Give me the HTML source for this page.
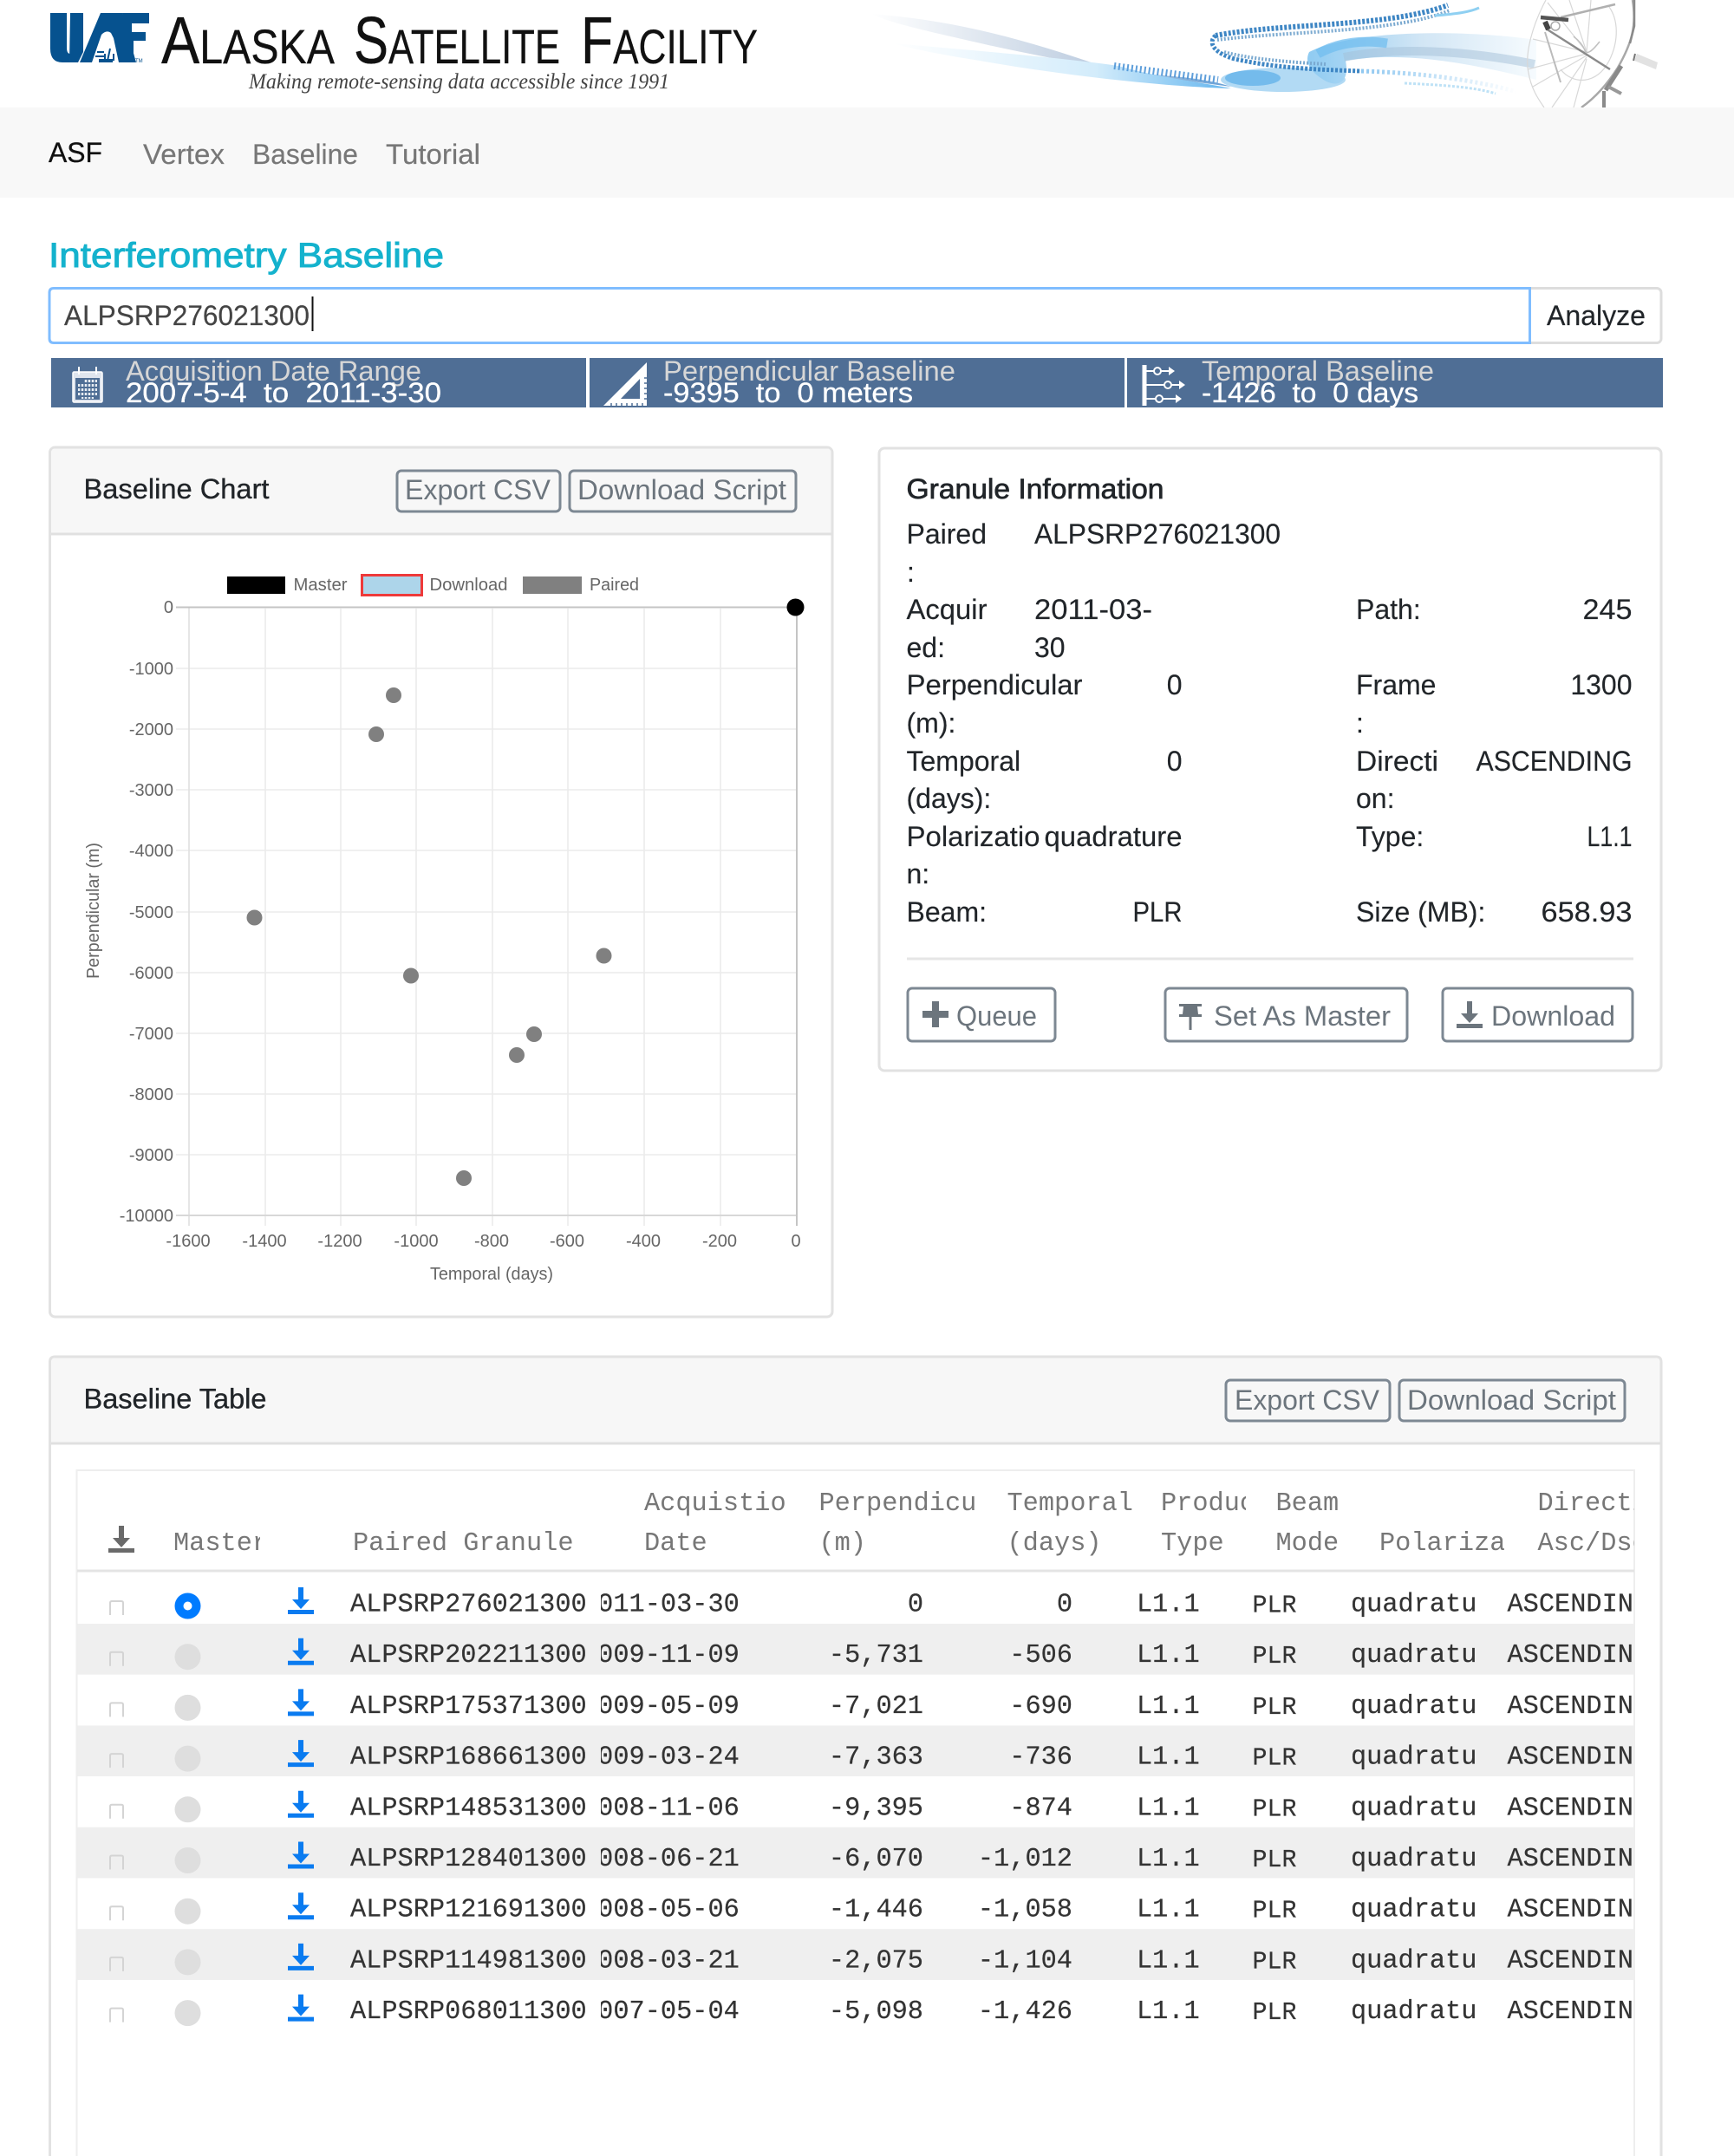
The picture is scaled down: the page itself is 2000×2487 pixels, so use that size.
<!DOCTYPE html>
<html><head><meta charset="utf-8"><title>Interferometry Baseline</title>
<style>
html,body{margin:0;padding:0;background:#fff;width:2000px;height:2487px;overflow:hidden}
svg{display:block;position:absolute;left:0;top:0}
text{font-family:"Liberation Sans",sans-serif;white-space:pre}
.m text,text.m{font-family:"Liberation Mono",monospace;font-size:30.3px}
.btn{fill:none;stroke:#7d8893;stroke-width:3}
.bt{fill:#6c757d;font-size:32px}
.h{font-size:32px;fill:#212529;stroke:#212529;stroke-width:.35}
.g{font-size:32px;fill:#212529;stroke:#212529;stroke-width:.15}
.tick{font-size:20px;fill:#666}
.leg{font-size:20px;fill:#666}
.st{font-size:32px;fill:#d6d6d6}
.sv{font-size:32px;fill:#fff;stroke:#fff;stroke-width:.3}
.hd text{fill:#777}
.row text{fill:#333;stroke:#333;stroke-width:.2}
</style></head>
<body>
<svg width="2000" height="2487" viewBox="0 0 2000 2487" xmlns="http://www.w3.org/2000/svg">
<defs>
<linearGradient id="g1" x1="0" x2="1" y1="0" y2="0"><stop offset="0" stop-color="#fff"/><stop offset=".35" stop-color="#d5dfeb"/><stop offset=".7" stop-color="#a7bcd6"/><stop offset="1" stop-color="#4a8ecf"/></linearGradient>
<linearGradient id="g2" x1="0" x2="1" y1="0" y2="0"><stop offset="0" stop-color="#fff"/><stop offset=".6" stop-color="#d3ecfb"/><stop offset="1" stop-color="#63b5ee"/></linearGradient>
<linearGradient id="g3" x1="0" x2="1" y1="0" y2="0"><stop offset="0" stop-color="#8fcbf2"/><stop offset=".5" stop-color="#d2e6f5"/><stop offset="1" stop-color="#f6fbfe"/></linearGradient>
<linearGradient id="g4" x1="0" x2="1" y1="0" y2="0"><stop offset="0" stop-color="#5fb0ea"/><stop offset="1" stop-color="#fff"/></linearGradient>
<path id="dl" d="M12 0h6v14h7L15 25 5 14h7zM0 26h30v5H0z"/>
<path id="cb" d="M1 17V3q0-2 2-2h11q2 0 2 2v14" fill="none" stroke="#d4d4d4" stroke-width="2"/>
<clipPath id="cd"><rect x="693" y="1815" width="170" height="59"/></clipPath>
<clipPath id="cq"><rect x="1550" y="1815" width="153" height="59"/></clipPath>
<clipPath id="ca"><rect x="1730" y="1815" width="155" height="59"/></clipPath>
<clipPath id="c1"><rect x="190" y="1700" width="110" height="110"/></clipPath>
<clipPath id="c2"><rect x="1330" y="1700" width="107" height="110"/></clipPath>
<clipPath id="c3"><rect x="1585" y="1700" width="150" height="110"/></clipPath>
<clipPath id="c4"><rect x="1770" y="1700" width="115" height="110"/></clipPath>
</defs>

<!-- UAF logo -->
<g fill="#06528f">
<path d="M58 15H77V55Q77 62 81 62L80 72H72Q58 72 58 56Z"/>
<path d="M81 15H96V60L90 72H80Z"/>
<path d="M92 72L116 15H141L157 72Z"/>
<path d="M141 15H172V27H152V37H168V47H154V72H146Z"/>
</g>
<path d="M106 72L117 40Q123 34 128 38L131 44L137 72H130V68H114V72Z" fill="#fff"/>
<path d="M112 60H120M110 65H122" stroke="#06528f" stroke-width="2" fill="none"/>
<path d="M121 62V70M127 56L124 70M131 62V70" stroke="#06528f" stroke-width="2" fill="none"/>
<text x="156" y="72" font-size="6" fill="#06528f">TM</text>

<!-- Title -->
<g fill="#111" stroke="#111" stroke-width=".3">
<text x="186" y="73" textLength="200" lengthAdjust="spacingAndGlyphs"><tspan font-size="77">A</tspan><tspan font-size="56">LASKA</tspan></text>
<text x="408" y="73" textLength="238" lengthAdjust="spacingAndGlyphs"><tspan font-size="77">S</tspan><tspan font-size="56">ATELLITE</tspan></text>
<text x="670" y="73" textLength="204" lengthAdjust="spacingAndGlyphs"><tspan font-size="77">F</tspan><tspan font-size="56">ACILITY</tspan></text>
</g>
<text x="287" y="102" font-size="25" fill="#444" style="font-family:'Liberation Serif',serif;font-style:italic" textLength="485" lengthAdjust="spacingAndGlyphs">Making remote-sensing data accessible since 1991</text>

<!-- Banner swooshes -->
<path d="M1005 16C1110 24 1195 50 1270 76C1320 90 1370 84 1420 100C1340 90 1240 74 1140 52C1080 38 1030 28 1005 16Z" fill="url(#g1)" opacity=".85"/>
<path d="M1030 50C1120 58 1220 66 1290 76C1330 88 1380 94 1420 102C1340 100 1220 86 1130 70C1080 62 1050 56 1030 50Z" fill="url(#g2)"/>
<path d="M1285 76L1405 92" stroke="#4d94d6" stroke-width="8" stroke-dasharray="2 3" fill="none" opacity=".9"/>
<ellipse cx="1480" cy="92" rx="72" ry="14" fill="#a4d3f2" opacity=".85"/>
<ellipse cx="1445" cy="90" rx="32" ry="9" fill="#5fb0ea" opacity=".75"/>
<path d="M1510 60C1560 34 1690 34 1772 46V92C1700 74 1620 58 1552 70C1556 90 1548 102 1530 94C1512 84 1504 72 1510 60Z" fill="url(#g3)"/>
<path d="M1520 62C1545 48 1575 46 1600 50" stroke="#71bdef" stroke-width="11" fill="none" opacity=".75"/>
<path d="M1550 66C1610 54 1690 58 1770 74" stroke="#a3bfd8" stroke-width="10" fill="none" opacity=".5"/>
<path d="M1402 41C1480 26 1600 32 1670 6" stroke="#3e86c4" stroke-width="6" stroke-dasharray="3 2" fill="none"/>
<path d="M1404 46C1480 36 1610 38 1672 12" stroke="#7aa9d0" stroke-width="4" stroke-dasharray="2 2" fill="none"/>
<path d="M1402 41C1392 50 1402 62 1424 68C1470 78 1510 80 1570 82" stroke="#3e86c4" stroke-width="5" stroke-dasharray="3 2" fill="none"/>
<path d="M1412 60C1440 68 1490 72 1530 74" stroke="#7aa9d0" stroke-width="4" stroke-dasharray="2 2" fill="none"/>
<path d="M1570 82C1640 84 1700 92 1750 106" stroke="url(#g4)" stroke-width="5" stroke-dasharray="3 3" fill="none" opacity=".7"/>
<path d="M1655 18C1680 16 1695 14 1706 9" stroke="#8fd0f2" stroke-width="3" fill="none"/>
<path d="M1620 96C1660 98 1700 100 1725 108" stroke="#bfe2f6" stroke-width="3" stroke-dasharray="3 2" fill="none"/>

<!-- Dish -->
<g fill="none" stroke="#d8d8d8" stroke-width="1.2">
<path d="M1783 0C1768 28 1758 62 1763 84C1766 102 1774 114 1781 124"/>
<path d="M1800 80C1814 98 1842 98 1856 70C1868 46 1866 22 1856 8"/>
<path d="M1762 80L1830 62M1768 100L1830 64M1790 124L1830 66M1815 124L1830 68M1768 45L1830 60M1785 3L1830 60M1810 0L1830 60M1835 0L1830 60"/>
</g>
<g fill="none">
<path d="M1883 0C1888 30 1882 50 1866 78C1852 100 1838 114 1824 124" stroke="#a8a8a8" stroke-width="2.5"/>
<path d="M1885 0L1885 30L1880 50" stroke="#8a8a8a" stroke-width="2.5"/>
<path d="M1870 76L1852 104" stroke="#8a8a8a" stroke-width="5"/>
<path d="M1850 105V124" stroke="#8a8a8a" stroke-width="4"/>
<path d="M1855 100L1870 108" stroke="#999" stroke-width="4"/>
<path d="M1800 20L1863 5" stroke="#b0b0b0" stroke-width="2.500"/>
<path d="M1783 33L1857 80" stroke="#8a8a8a" stroke-width="2.500"/>
<path d="M1782 37L1800 95" stroke="#bbb" stroke-width="2"/>
<path d="M1777 20L1809 23" stroke="#555" stroke-width="4.500"/>
<path d="M1782 25L1786 34" stroke="#444" stroke-width="6"/>
<circle cx="1794" cy="30" r="5" stroke="#aaa" stroke-width="1.5"/>
<path d="M1815 42Q1825 50 1828 58T1845 48" stroke="#c0c0c0" stroke-width="1.5"/>
</g>
<path d="M1888 62L1912 72L1910 80L1885 70Z" fill="#e2e2e2"/>
<path d="M1886 62L1884 70" stroke="#777" stroke-width="2"/>

<!-- Navbar -->
<rect x="0" y="124" width="2000" height="104" fill="#f8f8f8"/>
<text x="56" y="187" font-size="32.5" fill="#111" stroke="#111" stroke-width=".3" textLength="62" lengthAdjust="spacingAndGlyphs">ASF</text>
<text x="165" y="189" font-size="32" fill="#777" stroke="#777" stroke-width=".2" textLength="94" lengthAdjust="spacingAndGlyphs">Vertex</text>
<text x="291" y="189" font-size="32" fill="#777" stroke="#777" stroke-width=".2" textLength="122" lengthAdjust="spacingAndGlyphs">Baseline</text>
<text x="445" y="189" font-size="32" fill="#777" stroke="#777" stroke-width=".2" textLength="109" lengthAdjust="spacingAndGlyphs">Tutorial</text>

<!-- Heading -->
<text x="56" y="308" font-size="40" fill="#14b2cd" stroke="#14b2cd" stroke-width=".9" textLength="456" lengthAdjust="spacingAndGlyphs">Interferometry Baseline</text>

<!-- Input -->
<rect x="1760" y="332.5" width="156" height="63" rx="5" fill="#fff" stroke="#ddd" stroke-width="3"/>
<path d="M1764.5 332.5H62q-5 0-5 5v53q0 5 5 5H1764.5Z" fill="#fff" stroke="#80bdff" stroke-width="3"/>
<text x="74" y="375" font-size="32" fill="#444" stroke="#444" stroke-width=".2" textLength="283" lengthAdjust="spacingAndGlyphs">ALPSRP276021300</text>
<rect x="359.5" y="342" width="2" height="40" fill="#111"/>
<text x="1784" y="375" font-size="32" fill="#212529" stroke="#212529" stroke-width=".2" textLength="114" lengthAdjust="spacingAndGlyphs">Analyze</text>

<!-- Stat bar -->
<rect x="59" y="413" width="617" height="57" fill="#4f6e95"/>
<rect x="680" y="413" width="617" height="57" fill="#4f6e95"/>
<rect x="1300" y="413" width="618" height="57" fill="#4f6e95"/>
<text class="st" x="145" y="439" textLength="341" lengthAdjust="spacingAndGlyphs">Acquisition Date Range</text>
<text class="sv" x="145" y="464" textLength="364" lengthAdjust="spacingAndGlyphs">2007-5-4&#160;&#160;to&#160;&#160;2011-3-30</text>
<text class="st" x="765" y="439" textLength="337" lengthAdjust="spacingAndGlyphs">Perpendicular Baseline</text>
<text class="sv" x="765" y="464" textLength="288" lengthAdjust="spacingAndGlyphs">-9395&#160;&#160;to&#160;&#160;0 meters</text>
<text class="st" x="1386" y="439" textLength="268" lengthAdjust="spacingAndGlyphs">Temporal Baseline</text>
<text class="sv" x="1386" y="464" textLength="250" lengthAdjust="spacingAndGlyphs">-1426&#160;&#160;to&#160;&#160;0 days</text>

<!-- calendar icon -->
<g>
<rect x="84" y="429" width="34" height="35" rx="1.5" fill="#dfe5ee" stroke="#fff" stroke-width="1.5"/>
<rect x="87" y="436" width="28" height="25" fill="#4f6e95"/>
<path d="M91 423V432M111 423V432" stroke="#fff" stroke-width="2"/>
<g fill="#e8edf3">
<rect x="97" y="438" width="15" height="3"/><rect x="90" y="443" width="22" height="3"/><rect x="90" y="448" width="22" height="3"/><rect x="90" y="453" width="22" height="3"/><rect x="94" y="458" width="14" height="2"/>
</g>
<path d="M93 437V460M97 437V460M101 437V460M105 437V460M109 437V460" stroke="#4f6e95" stroke-width="1.5"/>
</g>
<!-- set square icon -->
<path d="M696 468L746 418V468ZM716 460H738V437Z" fill="#fff" fill-rule="evenodd"/>
<path d="M705 469V465M711 469V465M717 469V465M723 469V465M729 469V465M735 469V465M741 469V465M747 460H743M747 454H743M747 448H743M747 442H743M747 436H743" stroke="#4f6e95" stroke-width="1.5"/>
<!-- timeline icon -->
<g stroke="#fff" fill="none">
<path d="M1320 421V468" stroke-width="5"/>
<path d="M1322 428H1352M1322 444H1365M1322 460H1362" stroke-width="2"/>
<circle cx="1335" cy="428" r="4" fill="#4f6e95" stroke-width="2"/>
<circle cx="1347" cy="444" r="4" fill="#4f6e95" stroke-width="2"/>
<circle cx="1337" cy="460" r="4" fill="#4f6e95" stroke-width="2"/>
</g>
<path d="M1348 423L1355 428L1348 433ZM1360 439L1367 444L1360 449ZM1356 455L1363 460L1356 465Z" fill="#fff"/>

<!-- Chart card -->
<rect x="57.5" y="516" width="902.5" height="1003" rx="6" fill="#fff" stroke="#e2e2e2" stroke-width="3"/>
<path d="M59 615V522q0-4.500 4.500-4.500H954q4.500 0 4.500 4.500V615Z" fill="#f7f7f7"/>
<path d="M59 616H959" stroke="#e0e0e0" stroke-width="3"/>
<text class="h" x="96.5" y="575" textLength="214" lengthAdjust="spacingAndGlyphs">Baseline Chart</text>
<rect class="btn" x="458" y="543" width="188" height="47" rx="5"/>
<text class="bt" x="467" y="576" textLength="168" lengthAdjust="spacingAndGlyphs">Export CSV</text>
<rect class="btn" x="657" y="543" width="261" height="47" rx="5"/>
<text class="bt" x="666" y="576" textLength="241" lengthAdjust="spacingAndGlyphs">Download Script</text>

<!-- Legend -->
<rect x="262" y="665" width="67" height="20" fill="#000"/>
<text class="leg" x="338.5" y="681" textLength="62" lengthAdjust="spacingAndGlyphs">Master</text>
<rect x="417.5" y="663.5" width="69" height="23" fill="#add5ea" stroke="#ee3a3a" stroke-width="3"/>
<text class="leg" x="495.5" y="681" textLength="90" lengthAdjust="spacingAndGlyphs">Download</text>
<rect x="603" y="665" width="68" height="20" fill="#808080"/>
<text class="leg" x="680" y="681" textLength="57" lengthAdjust="spacingAndGlyphs">Paired</text>

<!-- Grid -->
<g stroke="#ebebeb" stroke-width="1.6">
<path d="M306 702V1414M393 702V1414M480 702V1414M568 702V1414M655 702V1414M743 702V1414M831 702V1414"/>
<path d="M203 771H919M203 841H919M203 911H919M203 981H919M203 1052H919M203 1122H919M203 1192H919M203 1262H919M203 1332H919"/>
</g>
<path d="M218 701V1414" stroke="#e0e0e0" stroke-width="1.6"/>
<path d="M203 1402H919" stroke="#d8d8d8" stroke-width="2"/>
<path d="M203 700.5H919M919 700.5V1414" stroke="#c4c4c4" stroke-width="2"/>
<g text-anchor="end">
<text class="tick" x="200" y="707">0</text>
<text class="tick" x="200" y="778">-1000</text>
<text class="tick" x="200" y="848">-2000</text>
<text class="tick" x="200" y="918">-3000</text>
<text class="tick" x="200" y="988">-4000</text>
<text class="tick" x="200" y="1059">-5000</text>
<text class="tick" x="200" y="1129">-6000</text>
<text class="tick" x="200" y="1199">-7000</text>
<text class="tick" x="200" y="1269">-8000</text>
<text class="tick" x="200" y="1339">-9000</text>
<text class="tick" x="200" y="1409">-10000</text>
</g>
<g text-anchor="middle">
<text class="tick" x="217" y="1438">-1600</text>
<text class="tick" x="305" y="1438">-1400</text>
<text class="tick" x="392" y="1438">-1200</text>
<text class="tick" x="480" y="1438">-1000</text>
<text class="tick" x="567" y="1438">-800</text>
<text class="tick" x="654" y="1438">-600</text>
<text class="tick" x="742" y="1438">-400</text>
<text class="tick" x="830" y="1438">-200</text>
<text class="tick" x="918" y="1438">0</text>
<text class="tick" x="567" y="1476" textLength="142" lengthAdjust="spacingAndGlyphs">Temporal (days)</text>
</g>
<text class="tick" transform="translate(114,1129) rotate(-90)" textLength="157" lengthAdjust="spacingAndGlyphs">Perpendicular (m)</text>
<g fill="#808080">
<circle cx="454" cy="802" r="9"/>
<circle cx="434" cy="847" r="9"/>
<circle cx="293.500" cy="1058.500" r="9"/>
<circle cx="474" cy="1125.500" r="9"/>
<circle cx="696.500" cy="1102.500" r="9"/>
<circle cx="616" cy="1193" r="9"/>
<circle cx="596" cy="1217" r="9"/>
<circle cx="535" cy="1359" r="9"/>
</g>
<circle cx="917.500" cy="700.500" r="10" fill="#000"/>

<!-- Granule card -->
<rect x="1014" y="517" width="902" height="718" rx="6" fill="#fff" stroke="#e2e2e2" stroke-width="3"/>
<text x="1045.5" y="575" font-size="32" fill="#212529" stroke="#212529" stroke-width=".7" textLength="297" lengthAdjust="spacingAndGlyphs">Granule Information</text>
<text class="g" x="1045.5" y="627">Paired</text>
<text class="g" x="1046" y="671">:</text>
<text class="g" x="1193" y="627" textLength="284" lengthAdjust="spacingAndGlyphs">ALPSRP276021300</text>
<text class="g" x="1045.5" y="714" textLength="93" lengthAdjust="spacingAndGlyphs">Acquir</text>
<text class="g" x="1045.5" y="758">ed:</text>
<text class="g" x="1193" y="714" textLength="136" lengthAdjust="spacingAndGlyphs">2011-03-</text>
<text class="g" x="1193" y="758">30</text>
<text class="g" x="1564" y="714">Path:</text>
<text class="g" x="1882.5" y="714" text-anchor="end" textLength="57" lengthAdjust="spacingAndGlyphs">245</text>
<text class="g" x="1045.5" y="801" textLength="203" lengthAdjust="spacingAndGlyphs">Perpendicular</text>
<text class="g" x="1045.5" y="845">(m):</text>
<text class="g" x="1363.5" y="801" text-anchor="end">0</text>
<text class="g" x="1564" y="801">Frame</text>
<text class="g" x="1564" y="845">:</text>
<text class="g" x="1882.5" y="801" text-anchor="end">1300</text>
<text class="g" x="1045.5" y="889">Temporal</text>
<text class="g" x="1045.5" y="932">(days):</text>
<text class="g" x="1363.5" y="889" text-anchor="end">0</text>
<text class="g" x="1564" y="889" textLength="95" lengthAdjust="spacingAndGlyphs">Directi</text>
<text class="g" x="1564" y="932">on:</text>
<text class="g" x="1882.5" y="889" text-anchor="end" textLength="180" lengthAdjust="spacingAndGlyphs">ASCENDING</text>
<text class="g" x="1045.5" y="976" textLength="154" lengthAdjust="spacingAndGlyphs">Polarizatio</text>
<text class="g" x="1045.5" y="1019">n:</text>
<text class="g" x="1363.5" y="976" text-anchor="end" textLength="159" lengthAdjust="spacingAndGlyphs">quadrature</text>
<text class="g" x="1564" y="976">Type:</text>
<text class="g" x="1882.5" y="976" text-anchor="end" textLength="52" lengthAdjust="spacingAndGlyphs">L1.1</text>
<text class="g" x="1045.5" y="1063">Beam:</text>
<text class="g" x="1363.5" y="1063" text-anchor="end" textLength="57" lengthAdjust="spacingAndGlyphs">PLR</text>
<text class="g" x="1564" y="1063">Size (MB):</text>
<text class="g" x="1882.5" y="1063" text-anchor="end" textLength="105" lengthAdjust="spacingAndGlyphs">658.93</text>
<path d="M1046 1106H1884" stroke="#e6e6e6" stroke-width="3"/>
<rect class="btn" x="1047" y="1140" width="170" height="61" rx="5"/>
<path d="M1064 1166H1075V1155H1083V1166H1094V1174H1083V1185H1075V1174H1064Z" fill="#6c757d"/>
<text class="bt" x="1103" y="1183" textLength="93" lengthAdjust="spacingAndGlyphs">Queue</text>
<rect class="btn" x="1344" y="1140" width="279" height="61" rx="5"/>
<path d="M1360 1158H1386V1161H1381L1382 1170H1386V1173H1374.5V1188H1371.5V1173H1360V1170H1364L1365 1161H1360Z" fill="#6c757d"/>
<text class="bt" x="1400" y="1183" textLength="204" lengthAdjust="spacingAndGlyphs">Set As Master</text>
<rect class="btn" x="1664" y="1140" width="219" height="61" rx="5"/>
<use href="#dl" x="1680" y="1155" fill="#6c757d"/>
<text class="bt" x="1720" y="1183" textLength="143" lengthAdjust="spacingAndGlyphs">Download</text>

<!-- Table card -->
<path d="M57.5 2500V1571q0-6 6-6H1910q6 0 6 6V2500" fill="#fff" stroke="#e2e2e2" stroke-width="3"/>
<path d="M59 1665V1572q0-5.5 5.5-5.5H1909q5.5 0 5.5 5.5V1665Z" fill="#f7f7f7"/>
<path d="M59 1665H1915" stroke="#e0e0e0" stroke-width="3"/>
<text class="h" x="96.5" y="1624.5" textLength="211" lengthAdjust="spacingAndGlyphs">Baseline Table</text>
<rect class="btn" x="1414" y="1592" width="189" height="47" rx="5"/>
<text class="bt" x="1424" y="1626" textLength="167" lengthAdjust="spacingAndGlyphs">Export CSV</text>
<rect class="btn" x="1614" y="1592" width="260" height="47" rx="5"/>
<text class="bt" x="1623" y="1626" textLength="241" lengthAdjust="spacingAndGlyphs">Download Script</text>

<!-- Inner table -->
<path d="M88.5 2500V1696H1885V2500" fill="#fff" stroke="#eee" stroke-width="2"/>
<path d="M89 1812H1885" stroke="#e4e4e4" stroke-width="3"/>
<use href="#dl" x="125" y="1760" fill="#6a6a6a"/>
<g class="m hd">
<text x="200" y="1788" clip-path="url(#c1)">Master</text>
<text x="407" y="1788">Paired Granule</text>
<text x="743" y="1742">Acquistio</text>
<text x="743" y="1788">Date</text>
<text x="944.5" y="1742">Perpendicu</text>
<text x="944.5" y="1788">(m)</text>
<text x="1161.5" y="1742">Temporal</text>
<text x="1161.5" y="1788">(days)</text>
<text x="1339" y="1742" clip-path="url(#c2)">Product</text>
<text x="1339" y="1788">Type</text>
<text x="1471.5" y="1742">Beam</text>
<text x="1471.5" y="1788">Mode</text>
<text x="1591" y="1788" clip-path="url(#c3)">Polarization</text>
<text x="1773.5" y="1742" clip-path="url(#c4)">Direction</text>
<text x="1773.5" y="1788" clip-path="url(#c4)">Asc/Dsc</text>
</g>

<!-- Row shading -->
<g fill="#efefef">
<rect x="89.500" y="1873" width="1795.500" height="58.700"/>
<rect x="89.500" y="1990.400" width="1795.500" height="58.700"/>
<rect x="89.500" y="2107.800" width="1795.500" height="58.700"/>
<rect x="89.500" y="2225.200" width="1795.500" height="58.700"/>
</g>

<g class="m row">
<g>
<use href="#cb" x="126" y="1846"/><circle cx="216.500" cy="1852.500" r="15" fill="#007bff"/><circle cx="216.500" cy="1852.500" r="5" fill="#fff"/><use href="#dl" x="332" y="1831" fill="#0a7bf0"/>
<text x="404" y="1858.500">ALPSRP276021300</text><text x="671" y="1858.500" clip-path="url(#cd)">2011-03-30</text><text x="1065" y="1858.500" text-anchor="end">0</text><text x="1237" y="1858.500" text-anchor="end">0</text><text x="1311" y="1858.500">L1.1</text><text x="1444.500" y="1859.500" style="font-size:28.3px">PLR</text><text x="1558" y="1858.500" clip-path="url(#cq)">quadrature</text><text x="1738.500" y="1858.500" clip-path="url(#ca)">ASCENDING</text>
</g>
<g transform="translate(0,58.700)">
<use href="#cb" x="126" y="1846"/><circle cx="216.500" cy="1852.500" r="15" fill="#dedede"/><use href="#dl" x="332" y="1831" fill="#0a7bf0"/>
<text x="404" y="1858.500">ALPSRP202211300</text><text x="671" y="1858.500" clip-path="url(#cd)">2009-11-09</text><text x="1065" y="1858.500" text-anchor="end">-5,731</text><text x="1237" y="1858.500" text-anchor="end">-506</text><text x="1311" y="1858.500">L1.1</text><text x="1444.500" y="1859.500" style="font-size:28.3px">PLR</text><text x="1558" y="1858.500" clip-path="url(#cq)">quadrature</text><text x="1738.500" y="1858.500" clip-path="url(#ca)">ASCENDING</text>
</g>
<g transform="translate(0,117.400)">
<use href="#cb" x="126" y="1846"/><circle cx="216.500" cy="1852.500" r="15" fill="#dedede"/><use href="#dl" x="332" y="1831" fill="#0a7bf0"/>
<text x="404" y="1858.500">ALPSRP175371300</text><text x="671" y="1858.500" clip-path="url(#cd)">2009-05-09</text><text x="1065" y="1858.500" text-anchor="end">-7,021</text><text x="1237" y="1858.500" text-anchor="end">-690</text><text x="1311" y="1858.500">L1.1</text><text x="1444.500" y="1859.500" style="font-size:28.3px">PLR</text><text x="1558" y="1858.500" clip-path="url(#cq)">quadrature</text><text x="1738.500" y="1858.500" clip-path="url(#ca)">ASCENDING</text>
</g>
<g transform="translate(0,176.100)">
<use href="#cb" x="126" y="1846"/><circle cx="216.500" cy="1852.500" r="15" fill="#dedede"/><use href="#dl" x="332" y="1831" fill="#0a7bf0"/>
<text x="404" y="1858.500">ALPSRP168661300</text><text x="671" y="1858.500" clip-path="url(#cd)">2009-03-24</text><text x="1065" y="1858.500" text-anchor="end">-7,363</text><text x="1237" y="1858.500" text-anchor="end">-736</text><text x="1311" y="1858.500">L1.1</text><text x="1444.500" y="1859.500" style="font-size:28.3px">PLR</text><text x="1558" y="1858.500" clip-path="url(#cq)">quadrature</text><text x="1738.500" y="1858.500" clip-path="url(#ca)">ASCENDING</text>
</g>
<g transform="translate(0,234.800)">
<use href="#cb" x="126" y="1846"/><circle cx="216.500" cy="1852.500" r="15" fill="#dedede"/><use href="#dl" x="332" y="1831" fill="#0a7bf0"/>
<text x="404" y="1858.500">ALPSRP148531300</text><text x="671" y="1858.500" clip-path="url(#cd)">2008-11-06</text><text x="1065" y="1858.500" text-anchor="end">-9,395</text><text x="1237" y="1858.500" text-anchor="end">-874</text><text x="1311" y="1858.500">L1.1</text><text x="1444.500" y="1859.500" style="font-size:28.3px">PLR</text><text x="1558" y="1858.500" clip-path="url(#cq)">quadrature</text><text x="1738.500" y="1858.500" clip-path="url(#ca)">ASCENDING</text>
</g>
<g transform="translate(0,293.500)">
<use href="#cb" x="126" y="1846"/><circle cx="216.500" cy="1852.500" r="15" fill="#dedede"/><use href="#dl" x="332" y="1831" fill="#0a7bf0"/>
<text x="404" y="1858.500">ALPSRP128401300</text><text x="671" y="1858.500" clip-path="url(#cd)">2008-06-21</text><text x="1065" y="1858.500" text-anchor="end">-6,070</text><text x="1237" y="1858.500" text-anchor="end">-1,012</text><text x="1311" y="1858.500">L1.1</text><text x="1444.500" y="1859.500" style="font-size:28.3px">PLR</text><text x="1558" y="1858.500" clip-path="url(#cq)">quadrature</text><text x="1738.500" y="1858.500" clip-path="url(#ca)">ASCENDING</text>
</g>
<g transform="translate(0,352.200)">
<use href="#cb" x="126" y="1846"/><circle cx="216.500" cy="1852.500" r="15" fill="#dedede"/><use href="#dl" x="332" y="1831" fill="#0a7bf0"/>
<text x="404" y="1858.500">ALPSRP121691300</text><text x="671" y="1858.500" clip-path="url(#cd)">2008-05-06</text><text x="1065" y="1858.500" text-anchor="end">-1,446</text><text x="1237" y="1858.500" text-anchor="end">-1,058</text><text x="1311" y="1858.500">L1.1</text><text x="1444.500" y="1859.500" style="font-size:28.3px">PLR</text><text x="1558" y="1858.500" clip-path="url(#cq)">quadrature</text><text x="1738.500" y="1858.500" clip-path="url(#ca)">ASCENDING</text>
</g>
<g transform="translate(0,410.900)">
<use href="#cb" x="126" y="1846"/><circle cx="216.500" cy="1852.500" r="15" fill="#dedede"/><use href="#dl" x="332" y="1831" fill="#0a7bf0"/>
<text x="404" y="1858.500">ALPSRP114981300</text><text x="671" y="1858.500" clip-path="url(#cd)">2008-03-21</text><text x="1065" y="1858.500" text-anchor="end">-2,075</text><text x="1237" y="1858.500" text-anchor="end">-1,104</text><text x="1311" y="1858.500">L1.1</text><text x="1444.500" y="1859.500" style="font-size:28.3px">PLR</text><text x="1558" y="1858.500" clip-path="url(#cq)">quadrature</text><text x="1738.500" y="1858.500" clip-path="url(#ca)">ASCENDING</text>
</g>
<g transform="translate(0,469.600)">
<use href="#cb" x="126" y="1846"/><circle cx="216.500" cy="1852.500" r="15" fill="#dedede"/><use href="#dl" x="332" y="1831" fill="#0a7bf0"/>
<text x="404" y="1858.500">ALPSRP068011300</text><text x="671" y="1858.500" clip-path="url(#cd)">2007-05-04</text><text x="1065" y="1858.500" text-anchor="end">-5,098</text><text x="1237" y="1858.500" text-anchor="end">-1,426</text><text x="1311" y="1858.500">L1.1</text><text x="1444.500" y="1859.500" style="font-size:28.3px">PLR</text><text x="1558" y="1858.500" clip-path="url(#cq)">quadrature</text><text x="1738.500" y="1858.500" clip-path="url(#ca)">ASCENDING</text>
</g>
</g>
</svg>
</body></html>
